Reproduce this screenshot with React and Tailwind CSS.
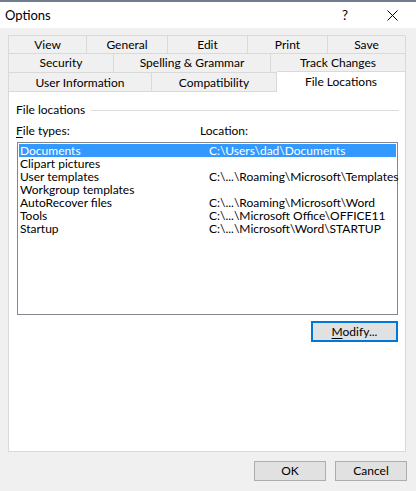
import React from "react";

const font = { fontFamily: 'Lato, "Noto Sans", sans-serif' };

const files = [
  ["Documents", "C:\\Users\\dad\\Documents"],
  ["Clipart pictures", ""],
  ["User templates", "C:\\...\\Roaming\\Microsoft\\Templates"],
  ["Workgroup templates", ""],
  ["AutoRecover files", "C:\\...\\Roaming\\Microsoft\\Word"],
  ["Tools", "C:\\...\\Microsoft Office\\OFFICE11"],
  ["Startup", "C:\\...\\Microsoft\\Word\\STARTUP"],
];

function Tab({ children, className = "" }) {
  return (
    <div className={`flex items-center justify-center border-r border-b border-[#d9d9d9] h-full ${className}`}>
      {children}
    </div>
  );
}

export default function App() {
  return (
    <div
      className="w-[416px] h-[491px] flex flex-col bg-[#f0f0f0] text-[12px] leading-[14px] text-black border-t-2 border-[#6f7d8c] overflow-hidden"
      style={font}
    >
      {/* title bar */}
      <div className="h-[26px] bg-white flex items-center pl-[5px] pr-[18px]">
        <span className="flex-1 text-[13px]">Options</span>
        <span className="w-[12px] mr-[33px] text-[13.5px]">?</span>
        <svg width="11" height="11" viewBox="0 0 11 11">
          <path d="M0.5 0.5 L10.5 10.5 M10.5 0.5 L0.5 10.5" stroke="#000" strokeWidth="1" />
        </svg>
      </div>

      <div className="flex-1 flex flex-col pl-[8px] pr-[10px] pt-[7px]">
        {/* tab rows */}
        <div className="grid grid-cols-[78px_81px_80px_80px_78px] h-[19px] border-t border-l border-[#d9d9d9] w-[397px]">
          <Tab>View</Tab>
          <Tab>General</Tab>
          <Tab>Edit</Tab>
          <Tab>Print</Tab>
          <Tab>Save</Tab>
        </div>
        <div className="grid grid-cols-[105px_157px_135px] h-[19px] border-l border-[#d9d9d9] w-[397px]">
          <Tab>Security</Tab>
          <Tab>Spelling &amp; Grammar</Tab>
          <Tab>Track Changes</Tab>
        </div>
        <div className="flex h-[19px] w-[398px] relative z-10">
          <div className="w-[144px] flex items-center justify-center border-l border-r border-[#d9d9d9]">User Information</div>
          <div className="w-[125px] flex items-center justify-center border-r border-[#d9d9d9]">Compatibility</div>
          <div className="flex-1 -mt-[2px] h-[22px] bg-white border-t border-r border-[#d9d9d9] flex items-center justify-center pb-[2px]">
            File Locations
          </div>
        </div>

        {/* panel */}
        <div className="h-[361px] -mt-px bg-white border border-[#d9d9d9] flex flex-col pl-[7px] pr-[6px] pt-[10px]">
          <div className="flex items-center h-[16px]">
            <span className="mr-[6px]">File locations</span>
            <div className="flex-1 h-px bg-[#dcdcdc]" />
          </div>
          <div className="flex h-[16px] items-center mt-[5px]">
            <span className="w-[184px] shrink-0">
              <span className="underline underline-offset-2">F</span>ile types:
            </span>
            <span>Location:</span>
          </div>
          <div className="mt-[3px] ml-px mr-[1px] h-[173px] border border-[#828790] p-px">
            {files.map(([name, loc], i) => (
              <div
                key={name}
                className={`flex h-[13px] items-center leading-[12px] ${i === 0 ? "bg-[#3399ff] text-white" : ""}`}
              >
                <span className="w-[190px] shrink-0 pl-[1px]">{name}</span>
                <span className="whitespace-nowrap">{loc}</span>
              </div>
            ))}
          </div>
          <div className="flex justify-end mt-[6px] mr-[1px]">
            <button className="w-[87px] h-[21px] bg-[#e1e1e1] border-2 border-[#0078d7] flex items-center justify-center">
              <span>
                <span className="underline underline-offset-2">M</span>odify...
              </span>
            </button>
          </div>
        </div>

        {/* bottom buttons */}
        <div className="flex justify-end gap-[9px] mt-[9px] mr-[-1px]">
          <button className="w-[72px] h-[20px] bg-[#e1e1e1] border border-[#adadad]">OK</button>
          <button className="w-[72px] h-[20px] bg-[#e1e1e1] border border-[#adadad]">Cancel</button>
        </div>
      </div>
    </div>
  );
}
